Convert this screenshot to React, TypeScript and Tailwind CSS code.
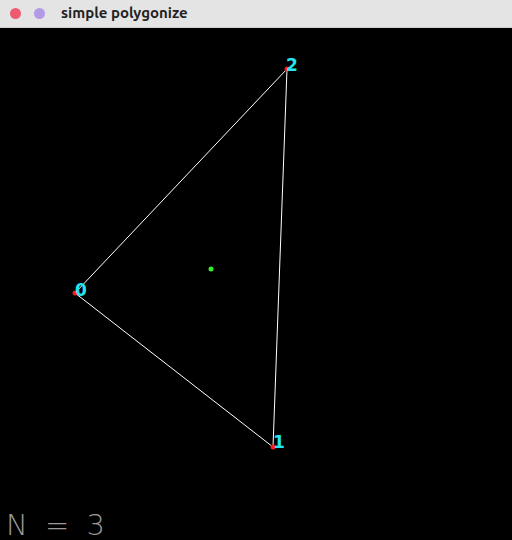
export default function App() {
  const p0 = { x: 75, y: 265 };
  const p1 = { x: 273, y: 419 };
  const p2 = { x: 287, y: 41 };

  return (
    <div className="w-[512px] h-[540px] flex flex-col bg-black overflow-hidden">
      {/* title bar */}
      <div className="h-[28px] shrink-0 bg-[#e4e4e4] flex items-center border-b border-[#d0d0d0]">
        <span className="ml-[10px] w-[11px] h-[11px] rounded-full bg-[#ee5a6f]" />
        <span className="ml-[13px] w-[11px] h-[11px] rounded-full bg-[#b29ae6]" />
        <span className="ml-[16px] text-[15px] font-bold text-[#222] font-['Ubuntu','DejaVu_Sans',sans-serif]">
          simple polygonize
        </span>
      </div>

      {/* canvas */}
      <svg width="512" height="512" viewBox="0 0 512 512" className="block">
        <polygon
          points={`${p0.x},${p0.y} ${p1.x},${p1.y} ${p2.x},${p2.y}`}
          fill="none"
          stroke="#ffffff"
          strokeWidth="1"
        />
        <circle cx={p0.x} cy={p0.y} r="2.5" fill="#ff1a1a" />
        <circle cx={p1.x} cy={p1.y} r="2.5" fill="#ff1a1a" />
        <circle cx={p2.x} cy={p2.y} r="2.5" fill="#ff1a1a" />
        <circle cx="211" cy="241" r="2.5" fill="#33ee33" />

        <g fill="#22e6f0" fontFamily="DejaVu Sans, sans-serif" fontWeight="bold" fontSize="17">
          <text x="75" y="268">0</text>
          <text x="273" y="420">1</text>
          <text x="286" y="43">2</text>
        </g>

        <text
          x="6"
          y="507"
          fill="#9a9a9a"
          fontFamily="DejaVu Sans, sans-serif"
          fontWeight="200"
          fontSize="29"
          letterSpacing="4"
          xmlSpace="preserve"
        >
          N = 3
        </text>
      </svg>
    </div>
  );
}
